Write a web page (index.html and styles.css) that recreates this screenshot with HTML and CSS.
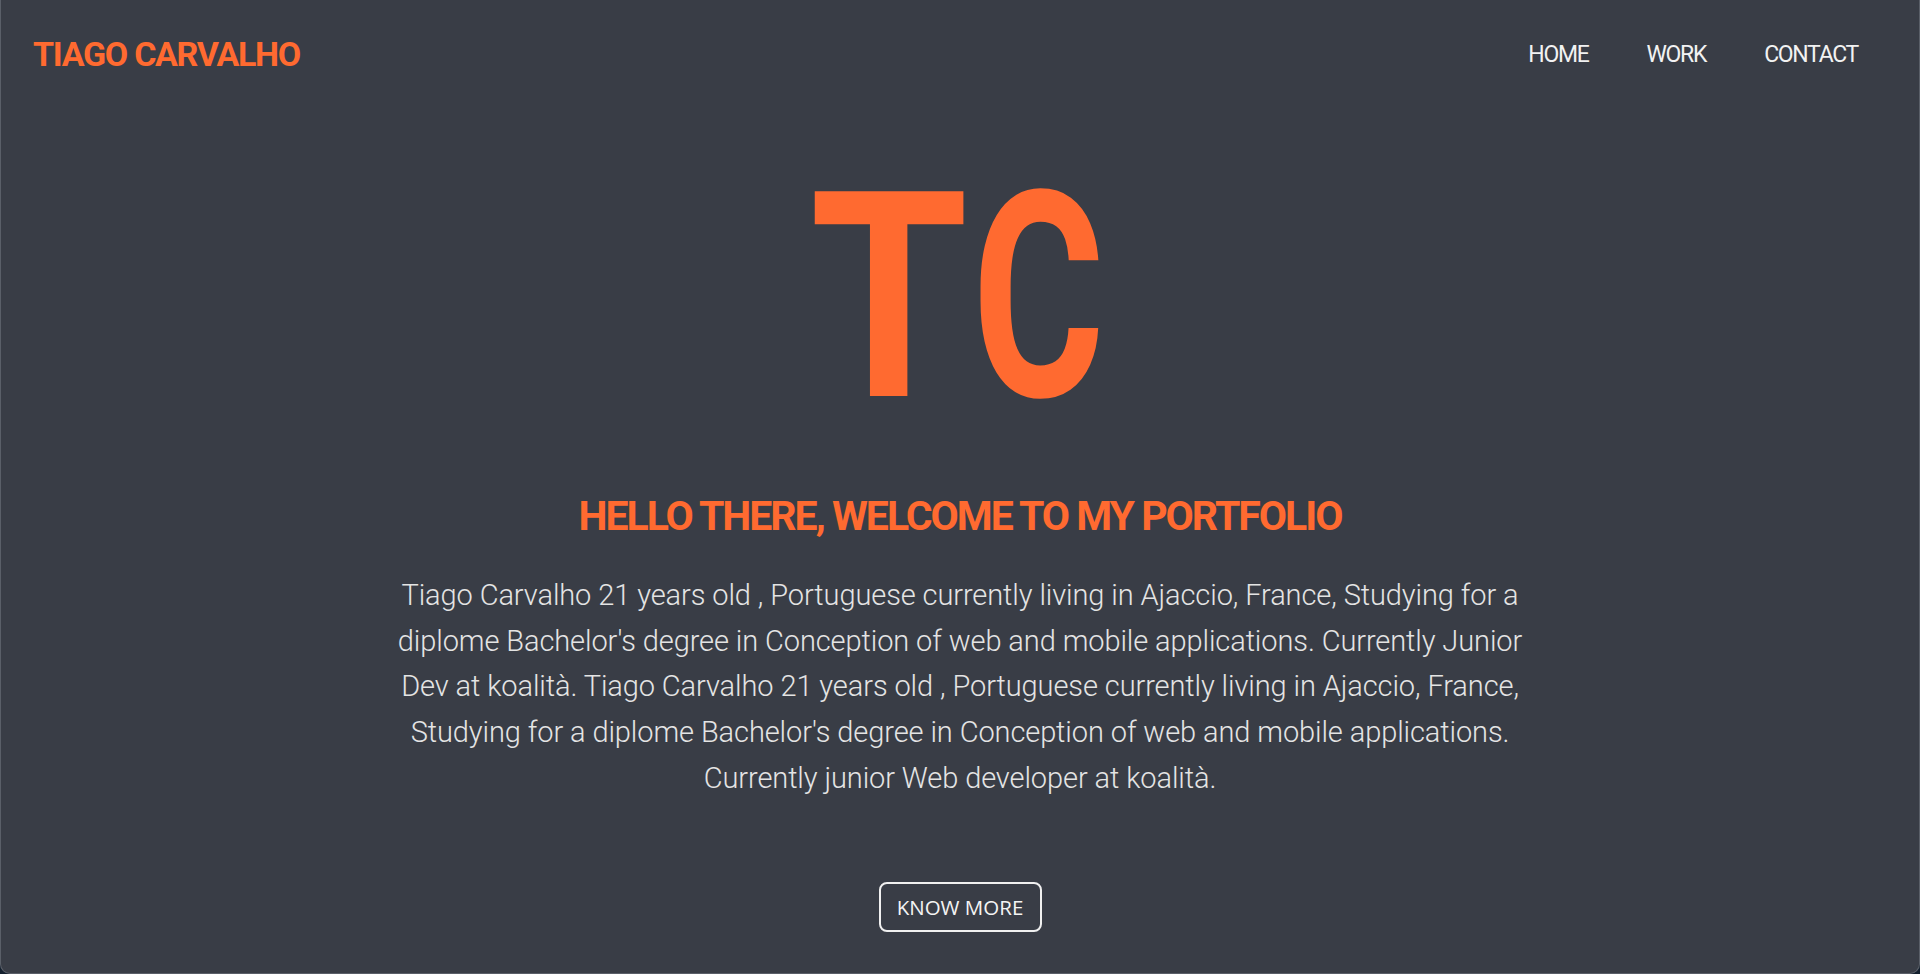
FILE: index.html
```html
<!DOCTYPE html>
<html lang="en">
<head>
<meta charset="utf-8">
<title>Tiago Carvalho</title>
<link rel="stylesheet" href="styles.css">
</head>
<body>
<div class="window">
  <header class="header">
    <a class="logo" href="#">TIAGO CARVALHO</a>
    <nav class="nav">
      <a href="#">HOME</a>
      <a href="#">WORK</a>
      <a href="#">CONTACT</a>
    </nav>
  </header>
  <main class="hero">
    <div class="monogram" aria-label="TC"><span class="mono-t">T</span><span class="mono-c">C</span></div>
    <h1 class="title">HELLO THERE, WELCOME TO MY PORTFOLIO</h1>
    <p class="intro">Tiago Carvalho 21 years old , Portuguese currently living in Ajaccio, France, Studying for a diplome Bachelor's degree in Conception of web and mobile applications. Currently Junior Dev at koalità. Tiago Carvalho 21 years old , Portuguese currently living in Ajaccio, France, Studying for a diplome Bachelor's degree in Conception of web and mobile applications. Currently junior Web developer at koalità.</p>
    <a class="btn" href="#">KNOW MORE</a>
  </main>
</div>
</body>
</html>
```
FILE: styles.css
```css
html, body {
  margin: 0;
  padding: 0;
}
body {
  background: #14202e;
  font-family: Roboto, "Noto Sans", sans-serif;
  overflow: hidden;
}
a {
  text-decoration: none;
}
.window {
  box-sizing: border-box;
  height: 974px;
  background: #393d46;
  border: 1px solid #5a5f68;
  border-top: none;
  border-radius: 0 0 10px 10px;
  display: flex;
  flex-direction: column;
}
.header {
  display: flex;
  justify-content: space-between;
  align-items: center;
  height: 108px;
  padding: 0 61px 0 32px;
}
.logo {
  color: #ff6a30;
  font-weight: 700;
  font-size: 34px;
  letter-spacing: -1.3px;
}
.nav {
  display: flex;
  gap: 58px;
}
.nav a {
  color: #f2f2f2;
  font-size: 23px;
  letter-spacing: -1.3px;
}
.hero {
  display: flex;
  flex-direction: column;
  align-items: center;
  text-align: center;
}
.monogram {
  margin-top: 46px;
  padding-left: 30px;
  height: 288px;
  display: flex;
  justify-content: center;
  color: #ff6a30;
  font-weight: 700;
  font-size: 288px;
  line-height: 1;
}
.mono-t {
  display: inline-block;
  transform: scaleX(0.89);
  transform-origin: right center;
}
.mono-c {
  display: inline-block;
  margin-left: 3px;
  transform: scaleX(0.705);
  transform-origin: left center;
}
.title {
  color: #ff6a30;
  font-weight: 700;
  font-size: 41px;
  line-height: 48px;
  letter-spacing: -2px;
  margin: 50px 0 0;
}
.intro {
  color: #e4e4e4;
  font-size: 29px;
  line-height: 45.7px;
  letter-spacing: -0.1px;
  font-weight: 300;
  max-width: 1125px;
  margin: 33px 0 0;
}
.btn {
  margin-top: 80px;
  box-sizing: border-box;
  width: 163px;
  height: 50px;
  display: flex;
  align-items: center;
  justify-content: center;
  border: 2px solid #f0f0f0;
  border-radius: 8px;
  color: #f4f4f4;
  font-family: "Open Sans", sans-serif;
  font-size: 20.5px;
}
```
